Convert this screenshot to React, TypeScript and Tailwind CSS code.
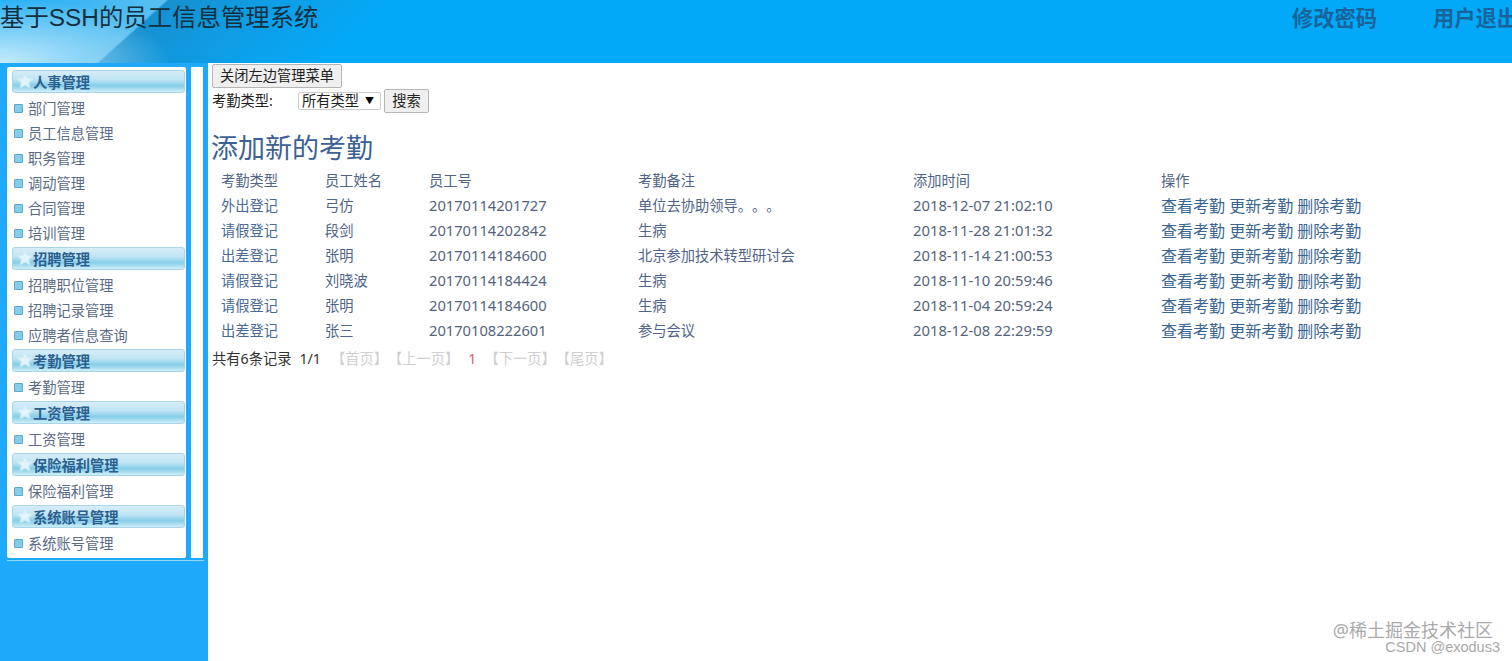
import React from "react";

const menus = [
  { title: "人事管理", items: ["部门管理", "员工信息管理", "职务管理", "调动管理", "合同管理", "培训管理"] },
  { title: "招聘管理", items: ["招聘职位管理", "招聘记录管理", "应聘者信息查询"] },
  { title: "考勤管理", items: ["考勤管理"] },
  { title: "工资管理", items: ["工资管理"] },
  { title: "保险福利管理", items: ["保险福利管理"] },
  { title: "系统账号管理", items: ["系统账号管理"] },
];

const rows = [
  ["外出登记", "弓仿", "20170114201727", "单位去协助领导。。。", "2018-12-07 21:02:10"],
  ["请假登记", "段剑", "20170114202842", "生病", "2018-11-28 21:01:32"],
  ["出差登记", "张明", "20170114184600", "北京参加技术转型研讨会", "2018-11-14 21:00:53"],
  ["请假登记", "刘晓波", "20170114184424", "生病", "2018-11-10 20:59:46"],
  ["请假登记", "张明", "20170114184600", "生病", "2018-11-04 20:59:24"],
  ["出差登记", "张三", "20170108222601", "参与会议", "2018-12-08 22:29:59"],
];

const font = "font-['Noto_Sans','Noto_Sans_CJK_SC',sans-serif]";

function MenuHead({ title }: { title: string }) {
  return (
    <div className="relative ml-[5px] mr-[1px] flex h-[23px] items-center rounded-[3px] border border-[#a8d5e8] bg-[linear-gradient(180deg,#d6edf7_0%,#c0e5f4_40%,#86cee9_70%,#d0eef8_100%)] pl-[20px] pt-[2px] text-[14.25px] font-bold text-[#2b5f8f]">
      <svg className="absolute left-[4px] top-[2px]" width="16" height="15" viewBox="0 0 17 16">
        <path d="M8.5 1l2.4 4.6 5.1.8-3.7 3.6.9 5-4.7-2.3-4.7 2.3.9-5L1 6.4l5.1-.8z" fill="#e3f4fb" stroke="#d0ecf7" strokeWidth="1.5" strokeLinejoin="round" />
      </svg>
      {title}
    </div>
  );
}

function MenuItem({ label }: { label: string }) {
  return (
    <div className="flex h-[25px] items-center pl-[7px] text-[14.25px] text-[#5a6b85]">
      <span className="mr-[5px] h-[9px] w-[9px] rounded-[1px] border border-[#5aa8cc] bg-[#88cde6]" />
      {label}
    </div>
  );
}

function Sidebar() {
  return (
    <aside className="flex w-[208px] shrink-0 items-start bg-[#1fa9fb] pl-[7px] pt-[4px]">
      <div className="flex w-[197px] flex-col">
        <div className="flex">
          <nav className="flex h-[491px] w-[179px] flex-col gap-[1px] rounded-[2px] bg-white pt-[3px]">
            {menus.map((m) => (
              <div key={m.title} className="flex flex-col">
                <MenuHead title={m.title} />
                <div className="flex flex-col pt-[3px]">
                  {m.items.map((i) => (
                    <MenuItem key={i} label={i} />
                  ))}
                </div>
              </div>
            ))}
          </nav>
          <div className="ml-[5px] w-[12px] bg-white" />
        </div>
        <div className="mt-[2px] h-[1px] bg-[#8ed6fc]" />
      </div>
    </aside>
  );
}

function Header() {
  return (
    <header className="flex h-[63px] items-start justify-between overflow-hidden bg-[radial-gradient(ellipse_170px_65px_at_0%_100%,#c5ebfc_0%,rgba(197,235,252,0)_100%),linear-gradient(138deg,#22aef5_0%,#58bff0_10.5%,#1690d0_10.7%,#0f9de4_17%,#03a9f9_25%)]">
      <h1 className="font-['Liberation_Sans','Noto_Sans_CJK_SC',sans-serif] text-[24.4px] leading-[36px] text-[#12303f]">
        基于SSH的员工信息管理系统
      </h1>
      <div className="flex w-[220px] shrink-0 gap-[56px] whitespace-nowrap pt-[4px] text-[21.25px] leading-[28px] font-bold text-[#17649b]">
        <span>修改密码</span>
        <span>用户退出</span>
      </div>
    </header>
  );
}

function Toolbar() {
  return (
    <div className="flex flex-col items-start pl-[4px]">
      <button className="h-[24px] rounded-[2px] border border-[#b5b5b5] bg-[#efefef] px-[7px] text-[14.25px] leading-[20px] text-[#222]">
        关闭左边管理菜单
      </button>
      <div className="flex items-center pt-[1px] text-[#222]">
        <span className="w-[86px] text-[14.25px]">考勤类型:</span>
        <div className="flex h-[18px] w-[83px] items-center justify-between rounded-[2px] border border-[#ccc] bg-white pl-[3px] pr-[6px] text-[14.25px]">
          所有类型
          <span className="text-[9px] text-black">▼</span>
        </div>
        <button className="ml-[3px] h-[24px] w-[45px] rounded-[2px] border border-[#b5b5b5] bg-[#efefef] text-[14.25px] leading-[20px]">
          搜索
        </button>
      </div>
    </div>
  );
}

function Table() {
  return (
    <table className="ml-[3px] w-[1200px] table-fixed border-separate border-spacing-0 text-[14.25px] text-[#4f6486]">
      <thead>
        <tr className="h-[25px] text-left">
          <th className="w-[104px] pl-[10px] font-normal">考勤类型</th>
          <th className="w-[104px] pl-[10px] font-normal">员工姓名</th>
          <th className="w-[209px] pl-[10px] font-normal">员工号</th>
          <th className="w-[275px] pl-[10px] font-normal">考勤备注</th>
          <th className="w-[248px] pl-[10px] font-normal">添加时间</th>
          <th className="w-[260px] pl-[10px] font-normal">操作</th>
        </tr>
      </thead>
      <tbody>
        {rows.map((r, i) => (
          <tr key={i} className="h-[25px]">
            <td className="pl-[10px] whitespace-nowrap text-[#4a6a96]">{r[0]}</td>
            <td className="pl-[10px] whitespace-nowrap">{r[1]}</td>
            <td className="pl-[10px] whitespace-nowrap text-[14.7px] text-[#55647c]">{r[2]}</td>
            <td className="pl-[10px] whitespace-nowrap">{r[3]}</td>
            <td className="pl-[10px] whitespace-nowrap text-[14.8px] text-[#55647c]">{r[4]}</td>
            <td className="pl-[10px] whitespace-nowrap text-[16px] text-[#3a6592]">查看考勤 更新考勤 删除考勤</td>
          </tr>
        ))}
      </tbody>
    </table>
  );
}

function Pager() {
  return (
    <div className="flex h-[32px] items-center whitespace-nowrap pl-[4px] text-[14.25px] text-[#333]">
      <span>共有6条记录</span>
      <span className="ml-[8px]">1/1</span>
      <span className="ml-[10px] text-[#d0d0d0]">【首页】【上一页】</span>
      <span className="ml-[9px] text-[#e0566f]">1</span>
      <span className="ml-[8px] text-[#d0d0d0]">【下一页】【尾页】</span>
    </div>
  );
}

export default function App() {
  return (
    <div className={`flex h-[661px] w-[1512px] flex-col overflow-hidden bg-white [text-spacing-trim:space-all] ${font}`}>
      <Header />
      <div className="flex flex-1">
        <Sidebar />
        <main className="relative flex-1 pt-[1px]">
          <Toolbar />
          <h2 className="pl-[3px] pt-[16px] text-[27px] leading-[38px] text-[#3c6194]">添加新的考勤</h2>
          <div className="pt-[1px]">
            <Table />
          </div>
          <Pager />
          <div className="absolute right-[19px] top-[558px] text-[18px] leading-[19px] text-[#aaa]">@稀土掘金技术社区</div>
          <div className="absolute right-[12px] top-[577px] font-['Liberation_Sans',sans-serif] text-[14.5px] leading-[14px] text-[#a8a8a8]">CSDN @exodus3</div>
        </main>
      </div>
    </div>
  );
}
